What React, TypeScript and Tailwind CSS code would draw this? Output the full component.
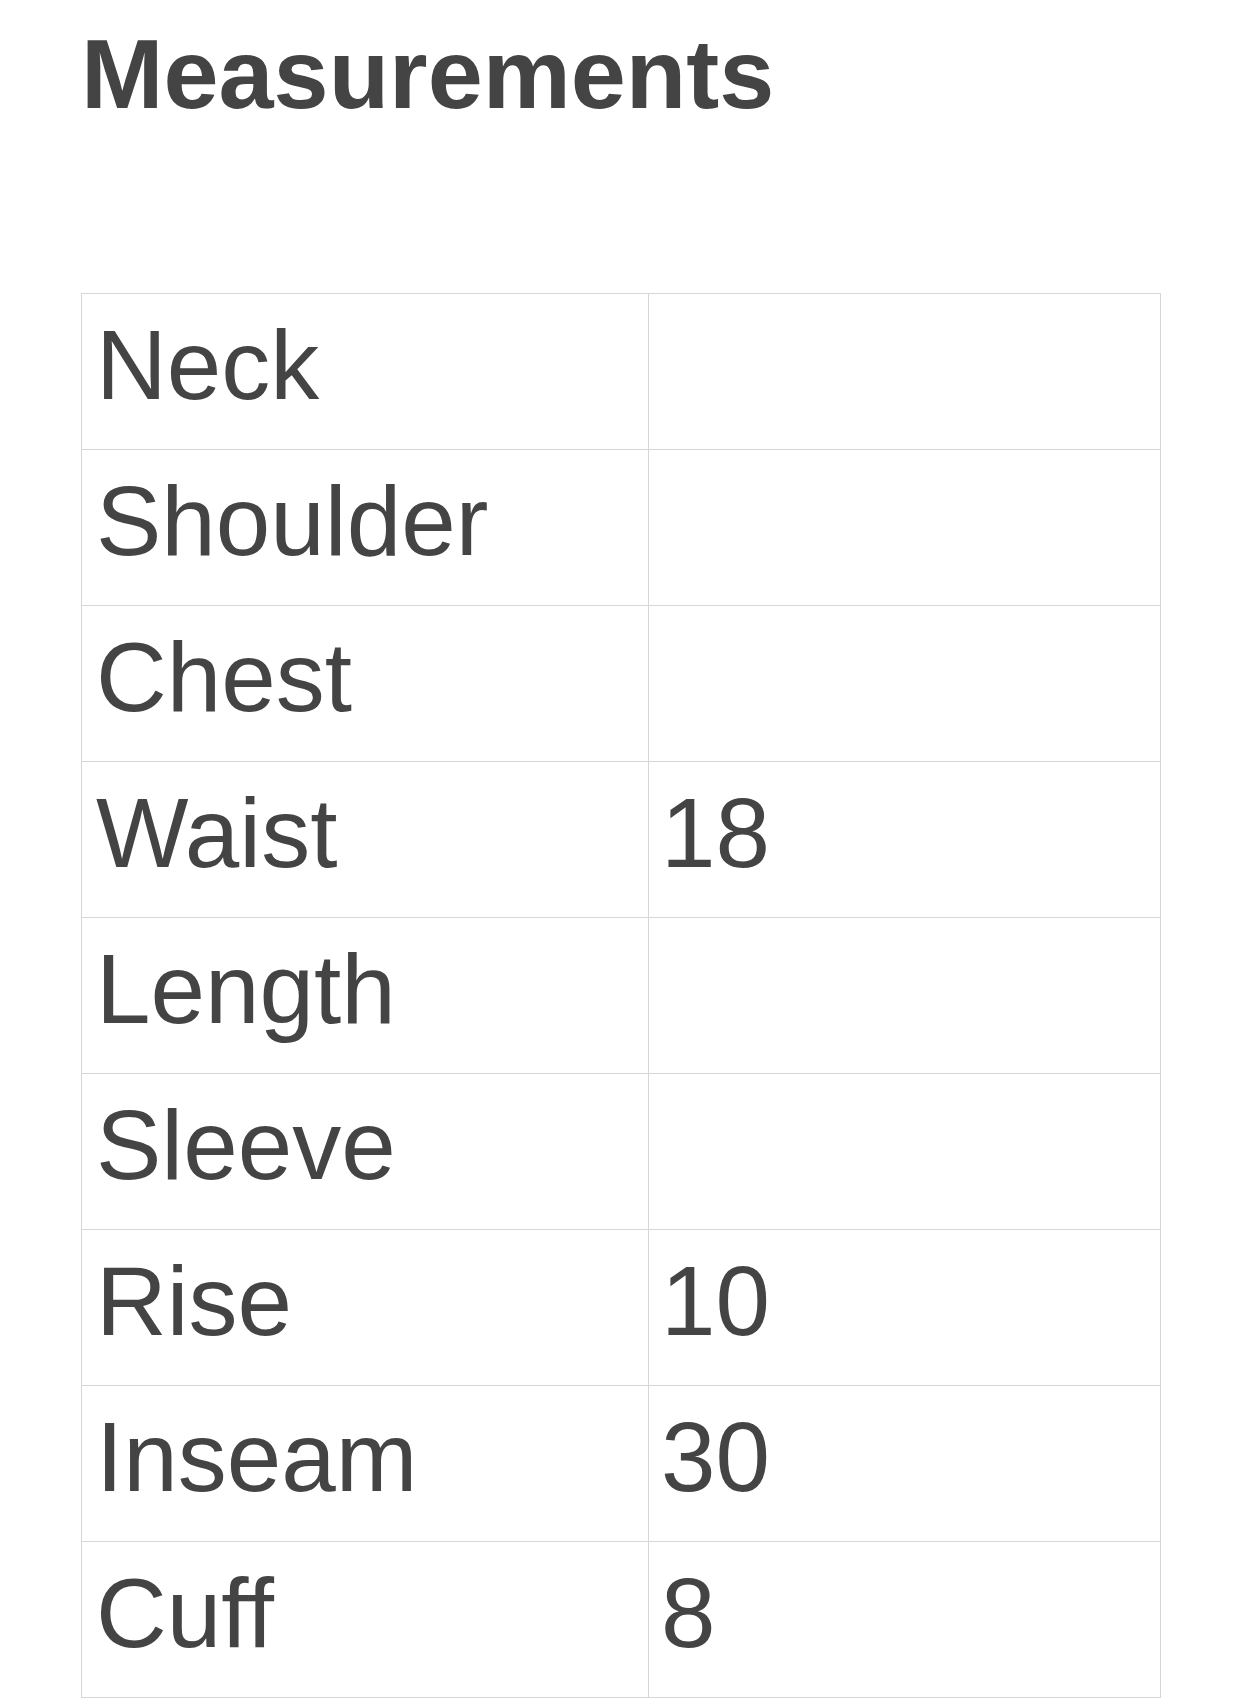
import React from "react";

type Row = {
  label: string;
  value?: string;
};

const rows: Row[] = [
  { label: "Neck" },
  { label: "Shoulder" },
  { label: "Chest" },
  { label: "Waist", value: "18" },
  { label: "Length" },
  { label: "Sleeve" },
  { label: "Rise", value: "10" },
  { label: "Inseam", value: "30" },
  { label: "Cuff", value: "8" },
];

export default function App() {
  return (
    <div
      className="min-h-[1700px] bg-white text-[#444444] px-[81px]"
      style={{ fontFamily: '"Liberation Sans", Arial, Helvetica, sans-serif' }}
    >
      {/*title*/}
      <h1 className="pt-[25px] text-[99px] leading-[98px] font-bold">Measurements</h1>
      {/*table*/}
      <table className="mt-[170px] w-[1080px] border-collapse table-fixed">
        <tbody>
          {rows.map((row) => (
            <tr key={row.label}>
              <td className="w-[567px] border border-[#d6d6d6] pl-[14px] pr-[12px] pt-[22px] pb-[35px] text-[98px] leading-[98px] align-top">
                {row.label}
              </td>
              <td className="border border-[#d6d6d6] pl-[12px] pr-[12px] pt-[22px] pb-[35px] text-[98px] leading-[98px] align-top">
                {row.value ?? ""}
              </td>
            </tr>
          ))}
        </tbody>
      </table>
    </div>
  );
}
